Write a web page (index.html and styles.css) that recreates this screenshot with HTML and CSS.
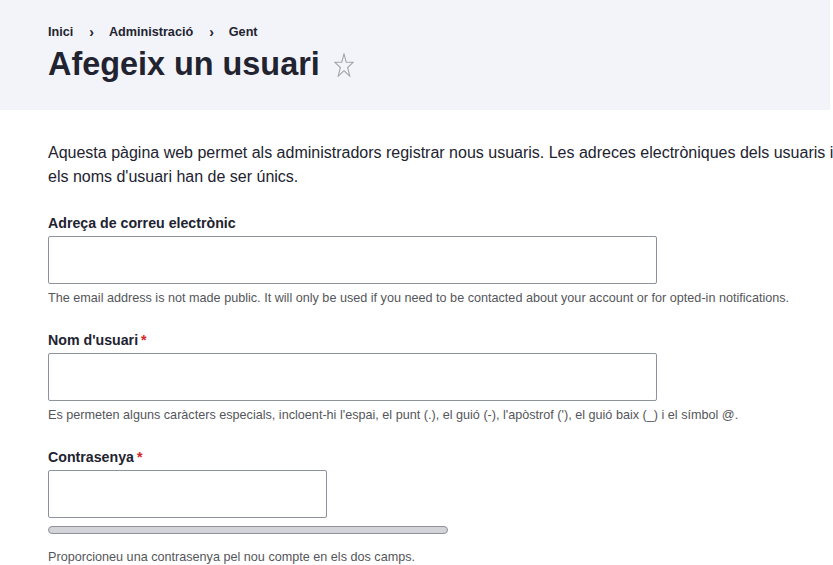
FILE: index.html
```html
<!DOCTYPE html>
<html lang="ca">
<head>
<meta charset="utf-8">
<title>Afegeix un usuari</title>
<link rel="stylesheet" href="styles.css">
</head>
<body>
<header class="page-header">
  <nav class="breadcrumb">
    <ol class="breadcrumb-list">
      <li class="breadcrumb-item"><a href="#">Inici</a></li>
      <li class="breadcrumb-sep">›</li>
      <li class="breadcrumb-item"><a href="#">Administració</a></li>
      <li class="breadcrumb-sep">›</li>
      <li class="breadcrumb-item"><a href="#">Gent</a></li>
    </ol>
  </nav>
  <div class="title-row">
    <h1 class="page-title">Afegeix un usuari</h1>
    <svg class="star" width="20" height="24" viewBox="0 0 20 24" aria-hidden="true">
      <path d="M10 0.8 L12.2 9.2 L19.3 9.2 L13.6 14.5 L15.8 23.1 L10 17.8 L4.2 23.1 L6.4 14.5 L0.7 9.2 L7.8 9.2 Z" fill="none" stroke="#a4a6ad" stroke-width="1.1" stroke-linejoin="miter"/>
    </svg>
  </div>
</header>
<main class="content">
  <p class="intro">Aquesta pàgina web permet als administradors registrar nous usuaris. Les adreces electròniques dels usuaris i els noms d'usuari han de ser únics.</p>
  <form class="user-form">
    <div class="form-item first">
      <label class="form-label" for="mail">Adreça de correu electrònic</label>
      <input class="form-input wide" id="mail" type="email">
      <div class="form-desc">The email address is not made public. It will only be used if you need to be contacted about your account or for opted-in notifications.</div>
    </div>
    <div class="form-item">
      <label class="form-label required" for="name">Nom d'usuari</label>
      <input class="form-input wide" id="name" type="text">
      <div class="form-desc">Es permeten alguns caràcters especials, incloent-hi l'espai, el punt (.), el guió (-), l'apòstrof ('), el guió baix (_) i el símbol @.</div>
    </div>
    <div class="form-item">
      <label class="form-label required" for="pass">Contrasenya</label>
      <input class="form-input narrow" id="pass" type="password">
      <div class="strength"><div class="strength-fill"></div></div>
      <div class="form-desc pass-desc">Proporcioneu una contrasenya pel nou compte en els dos camps.</div>
    </div>
  </form>
</main>
</body>
</html>
```

FILE: styles.css
```css
html, body {
  margin: 0;
  padding: 0;
  overflow: hidden;
  background: #ffffff;
}
body {
  font-family: "Liberation Sans", Arial, sans-serif;
  color: #222330;
  width: 833px;
  height: 565px;
}
.page-header {
  box-sizing: border-box;
  width: 830px;
  height: 110px;
  background: #f3f4f9;
  padding: 24px 48px 0;
}
.breadcrumb-list {
  display: flex;
  list-style: none;
  margin: 0;
  padding: 0;
  font-size: 12.64px;
  line-height: 16px;
  font-weight: bold;
}
.breadcrumb-item a {
  color: #222330;
  text-decoration: none;
}
.breadcrumb-sep {
  margin: 0 15px 0 16px;
  font-size: 14px;
}
.title-row {
  display: flex;
  align-items: center;
  height: 48px;
}
.page-title {
  margin: 0;
  font-size: 32.4px;
  line-height: 48px;
  font-weight: bold;
}
.star {
  margin-left: 14px;
  margin-top: 1px;
}
.content {
  width: 800px;
  padding: 31px 48px 0;
}
.intro {
  margin: 0;
  font-size: 16px;
  line-height: 24px;
}
.form-item {
  margin-top: 25px;
}
.form-label {
  display: block;
  font-size: 14.2px;
  line-height: 18px;
  font-weight: bold;
  margin-bottom: 4px;
}
.form-label.required::after {
  content: "*";
  color: #dc2323;
  margin-left: 3px;
}
.form-input {
  display: block;
  box-sizing: border-box;
  height: 48px;
  border: 1px solid #8e929c;
  border-radius: 2px;
  background: #fff;
  margin: 0;
  padding: 0 16px;
}
.form-input.wide {
  width: 609px;
}
.form-input.narrow {
  width: 279px;
}
.form-desc {
  margin-top: 6px;
  font-size: 12.64px;
  line-height: 16px;
  color: #55565b;
}
.strength {
  box-sizing: border-box;
  width: 400px;
  height: 8px;
  margin-top: 8px;
  border: 1px solid #919297;
  border-radius: 4px;
  background: #d3d4d9;
}
.pass-desc {
  margin-top: 15px;
}
```
